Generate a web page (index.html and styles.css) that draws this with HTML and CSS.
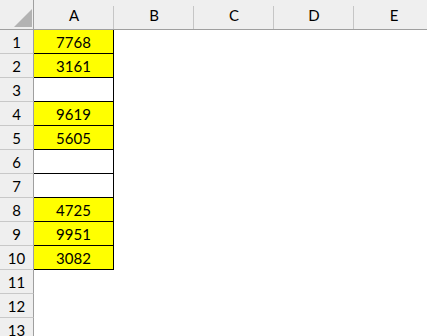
FILE: index.html
```html
<!DOCTYPE html>
<html lang="en">
<head>
  <meta charset="UTF-8" />
  <title>Sheet1</title>
  <link rel="stylesheet" href="styles.css">
</head>
<body>
  <div class="sheet">
    <div class="corner"><span class="tri"></span></div>
    <div class="col-head">A</div>
    <div class="col-head">B</div>
    <div class="col-head">C</div>
    <div class="col-head">D</div>
    <div class="col-head">E</div>

    <div class="row-head">1</div><div class="cell box fill">7768</div><div></div><div></div><div></div><div></div>
    <div class="row-head">2</div><div class="cell box fill">3161</div><div></div><div></div><div></div><div></div>
    <div class="row-head">3</div><div class="cell box"></div><div></div><div></div><div></div><div></div>
    <div class="row-head">4</div><div class="cell box fill">9619</div><div></div><div></div><div></div><div></div>
    <div class="row-head">5</div><div class="cell box fill">5605</div><div></div><div></div><div></div><div></div>
    <div class="row-head">6</div><div class="cell box"></div><div></div><div></div><div></div><div></div>
    <div class="row-head">7</div><div class="cell box"></div><div></div><div></div><div></div><div></div>
    <div class="row-head">8</div><div class="cell box fill">4725</div><div></div><div></div><div></div><div></div>
    <div class="row-head">9</div><div class="cell box fill">9951</div><div></div><div></div><div></div><div></div>
    <div class="row-head">10</div><div class="cell box fill">3082</div><div></div><div></div><div></div><div></div>
    <div class="row-head">11</div><div></div><div></div><div></div><div></div><div></div>
    <div class="row-head">12</div><div></div><div></div><div></div><div></div><div></div>
    <div class="row-head">13</div><div></div><div></div><div></div><div></div><div></div>
  </div>
</body>
</html>
```

FILE: styles.css
```css
body {
  margin: 0;
  background: white;
  overflow: hidden;
  font-family: Lato, 'Liberation Sans', sans-serif;
  font-size: 15px;
  color: black;
}

.sheet {
  display: grid;
  grid-template-columns: 34px repeat(5, 80px);
  grid-template-rows: 30px repeat(13, 24px);
  width: 434px;
}

.sheet > div {
  box-sizing: border-box;
  display: flex;
  align-items: center;
  justify-content: center;
}

.corner {
  background: #efefef;
  border-right: 1px solid #9f9f9f;
  border-bottom: 1px solid #9f9f9f;
  padding: 9px 1px 2px 14px;
  align-items: stretch !important;
  justify-content: stretch !important;
}

.corner .tri {
  flex: 1;
  background: #b3b3b3;
  clip-path: polygon(100% 0, 100% 100%, 0 100%);
}

.col-head {
  background: linear-gradient(#c6c6c6, #c6c6c6) right 0 top 6px / 1px 100% no-repeat, #efefef;
  border-bottom: 1px solid #9f9f9f;
  padding-top: 1px;
}

.row-head {
  background: #efefef;
  border-right: 1px solid #9f9f9f;
  border-bottom: 1px solid #c8c8c8;
  padding-top: 1px;
}

.cell {
  padding-top: 1px;
}

.box {
  border-right: 1px solid black;
  border-bottom: 1px solid black;
}

.fill {
  background: #ffff00;
}
```
